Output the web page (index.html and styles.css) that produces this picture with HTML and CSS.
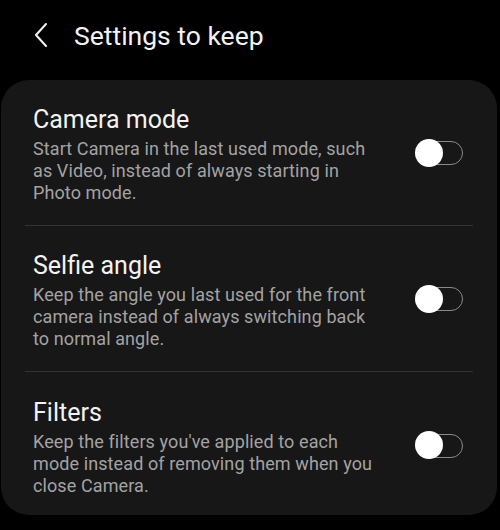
FILE: index.html
```html
<!DOCTYPE html>
<html lang="en">
<head>
    <meta charset="UTF-8">
    <meta name="viewport" content="width=device-width, initial-scale=1.0">
    <title>Settings to keep</title>
    <link rel="stylesheet" href="styles.css">
</head>
<body>
    <header class="top-bar">
        <span class="back-btn">
            <svg width="14" height="24" viewBox="0 0 14 24"><path d="M12 1 L2 12 L12 23" fill="none" stroke="#f2f2f2" stroke-width="2" stroke-linecap="round" stroke-linejoin="round"/></svg>
        </span>
        <h1 class="page-title">Settings to keep</h1>
    </header>

    <div class="card">
        <div class="setting-row">
            <div class="setting-text">
                <h2 class="setting-title">Camera mode</h2>
                <p class="setting-desc">Start Camera in the last used mode, such as Video, instead of always starting in Photo mode.</p>
            </div>
            <span class="switch"><span class="knob"></span></span>
        </div>
        <div class="setting-row">
            <div class="setting-text">
                <h2 class="setting-title">Selfie angle</h2>
                <p class="setting-desc">Keep the angle you last used for the front camera instead of always switching back to normal angle.</p>
            </div>
            <span class="switch"><span class="knob"></span></span>
        </div>
        <div class="setting-row">
            <div class="setting-text">
                <h2 class="setting-title">Filters</h2>
                <p class="setting-desc">Keep the filters you've applied to each mode instead of removing them when you close Camera.</p>
            </div>
            <span class="switch"><span class="knob"></span></span>
        </div>
    </div>
</body>
</html>
```

FILE: styles.css
```css
* {
    margin: 0;
    padding: 0;
    box-sizing: border-box;
    font-family: Roboto, "Noto Sans", sans-serif;
}

body {
    background: #000;
    color: #f2f2f2;
    width: 500px;
    height: 530px;
    overflow: hidden;
}

.top-bar {
    display: flex;
    align-items: center;
    height: 70px;
    padding-left: 34px;
}

.back-btn {
    display: flex;
    width: 40px;
}

.page-title {
    font-size: 26.5px;
    font-weight: 400;
}

.card {
    margin: 10px 3px 0 1px;
    background: #171717;
    border-radius: 28px;
    padding: 0 24px;
    height: 435px;
}

.setting-row {
    display: flex;
    align-items: center;
    padding: 25px 8px 21px;
    border-bottom: 1px solid #333;
    height: 146px;
}

.setting-row:last-child {
    border-bottom: none;
}

.setting-text {
    flex: 1;
}

.setting-title {
    font-size: 25px;
    font-weight: 400;
    line-height: 30px;
    margin-bottom: 3px;
}

.setting-desc {
    font-size: 18px;
    letter-spacing: 0.1px;
    line-height: 22px;
    color: #a3a3a3;
    width: 352px;
}

.switch {
    position: relative;
    width: 46px;
    height: 24px;
    border: 1.5px solid #8a8a8a;
    border-radius: 12px;
    margin-right: 2px;
    margin-bottom: 3px;
}

.knob {
    position: absolute;
    left: -3px;
    top: -3.5px;
    width: 28px;
    height: 28px;
    border-radius: 50%;
    background: #fff;
}
```
